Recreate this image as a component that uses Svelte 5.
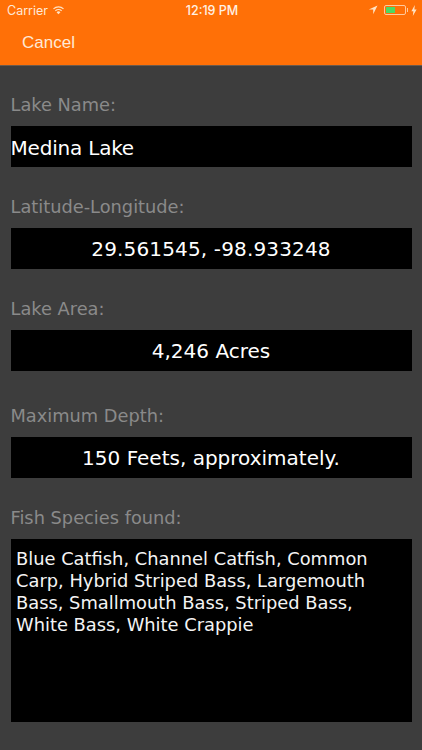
<script>
	const fields = [
		{ label: 'Lake Name:', value: 'Medina Lake', left: true },
		{ label: 'Latitude-Longitude:', value: '29.561545, -98.933248', digits: true },
		{ label: 'Lake Area:', value: '4,246 Acres' },
		{ label: 'Maximum Depth:', value: '150 Feets, approximately.', roomy: true }
	]
</script>

<div class="screen">
	<header>
		<div class="status">
			<div class="status-left">
				<span>Carrier</span>
				<svg width="13" height="10" viewBox="0 0 14 10">
					<path d="M7 9.6 4.9 7.3a3 3 0 0 1 4.2 0Z" fill="#ffe3c4" />
					<path d="M3.6 6a5 5 0 0 1 6.8 0" fill="none" stroke="#ffe3c4" stroke-width="1.3" />
					<path d="M1.6 3.8a8 8 0 0 1 10.8 0" fill="none" stroke="#ffe3c4" stroke-width="1.3" />
				</svg>
			</div>
			<div class="time">12:19 PM</div>
			<div class="status-right">
				<svg width="10" height="10" viewBox="0 0 10 10">
					<path d="M9.5.5 .8 4.6h4.4v4.6Z" fill="#ffe3c4" />
				</svg>
				<div class="battery"><div class="charge"></div></div>
				<div class="nub"></div>
				<svg width="6" height="11" viewBox="0 0 6 11">
					<path d="M3.8 0 .4 6.2h2L1.8 11l3.8-6.6h-2.2Z" fill="#ffe3c4" />
				</svg>
			</div>
		</div>
		<div class="nav">Cancel</div>
	</header>

	<main>
		{#each fields as f}
			<div class="label" class:roomy={f.roomy}>{f.label}</div>
			<div class="box" class:left={f.left} class:digits={f.digits}>{f.value}</div>
		{/each}
		<div class="label">Fish Species found:</div>
		<div class="notes">Blue Catfish, Channel Catfish, Common Carp, Hybrid Striped Bass, Largemouth Bass, Smallmouth Bass, Striped Bass, White Bass, White Crappie</div>
	</main>
</div>

<style>
	:global(body) {
		margin: 0;
		background: #3d3d3d;
	}

	.screen {
		width: 422px;
		height: 750px;
		overflow: hidden;
		background: #3d3d3d;
		font-family: "DejaVu Sans", Verdana, sans-serif;
	}

	header {
		height: 66px;
		box-sizing: border-box;
		background: #ff7007;
		border-bottom: 1px solid #6b5a4c;
		font-family: "Liberation Sans", Arial, sans-serif;
		color: #ffe9d6;
	}

	.status {
		height: 20px;
		display: grid;
		grid-template-columns: 1fr auto 1fr;
		align-items: center;
		padding: 0 5px 0 7px;
		font-family: Inter, "Liberation Sans", sans-serif;
		font-size: 12.5px;
	}

	.status-left {
		display: flex;
		align-items: center;
		gap: 4px;
	}

	.time {
		font-weight: 500;
		color: #fff1e4;
	}

	.status-right {
		display: flex;
		align-items: center;
		justify-content: flex-end;
	}

	.status-right svg:first-child {
		margin-right: 6px;
	}

	.status-right svg:last-child {
		margin-left: 3px;
	}

	.battery {
		width: 22px;
		height: 10px;
		box-sizing: border-box;
		border: 1px solid #ffc99c;
		border-radius: 2px;
		padding: 1px;
	}

	.charge {
		width: 9px;
		height: 100%;
		background: #4cd964;
	}

	.nub {
		width: 1.5px;
		height: 4px;
		background: #ffc99c;
		margin-left: 1px;
	}

	.nav {
		padding: 13px 0 0 22px;
		font-size: 17px;
		line-height: 20px;
	}

	main {
		padding: 0 10.5px;
	}

	.label {
		margin-top: 29px;
		height: 20px;
		line-height: 22px;
		font-size: 17.8px;
		color: #8a8a8a;
	}

	.label:first-child {
		margin-top: 28px;
	}

	.label.roomy {
		margin-top: 34px;
	}

	.box {
		margin-top: 12px;
		height: 41px;
		line-height: 43px;
		background: #000;
		color: #fff;
		font-size: 20px;
		text-align: center;
	}

	.box.left {
		line-height: 45px;
		text-align: left;
		letter-spacing: -0.2px;
	}

	.box.digits {
		letter-spacing: 0.15px;
	}

	.notes {
		margin-top: 12px;
		height: 183px;
		box-sizing: border-box;
		padding: 9px 5.5px;
		background: #000;
		color: #f4f4f4;
		font-size: 17.85px;
		line-height: 22px;
	}
</style>
